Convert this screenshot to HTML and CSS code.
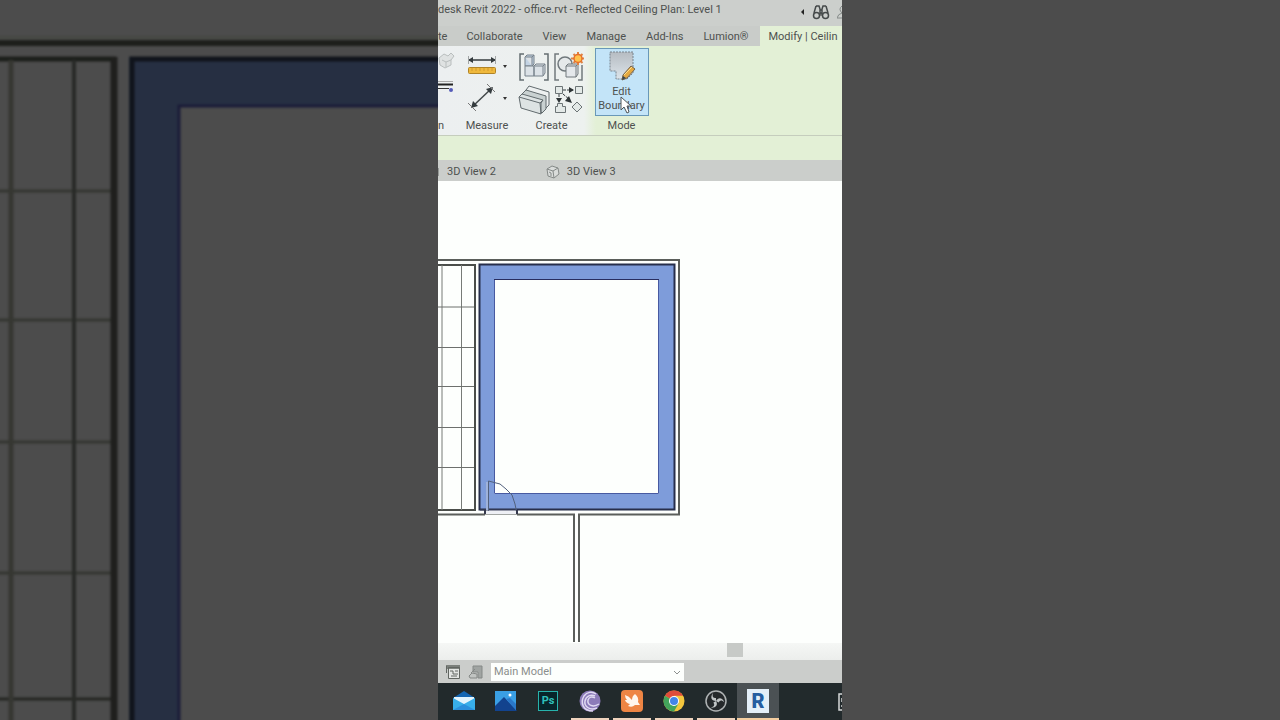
FILE: index.html
```html
<!DOCTYPE html>
<html lang="en">
<head>
<meta charset="utf-8">
<title>Reflected Ceiling Plan: Level 1</title>
<link rel="stylesheet" href="styles.css">
</head>
<body>
<div class="page">
  <div class="backdrop" aria-hidden="true">
    <svg class="fill" viewBox="0 0 438 720" preserveAspectRatio="xMaxYMin slice">
      <g class="soft">
        <path d="M-9 37.500H450" stroke="#464843" stroke-width="3"/>
        <path d="M-9 43H450" stroke="#1d1f1b" stroke-width="6"/>
        <path d="M-9 59H116" stroke="#1c1f1b" stroke-width="5"/>
        <path d="M-9 191H114M-9 320H114M-9 442H114M-9 573H114" stroke="#343631" stroke-width="3"/>
        <path d="M-9 699H114" stroke="#242622" stroke-width="3"/>
        <path d="M11 60V730" stroke="#363732" stroke-width="5"/>
        <path d="M74 60V730" stroke="#292b28" stroke-width="4"/>
        <path d="M114 57V730" stroke="#1f1f1d" stroke-width="7"/>
        <path d="M129 57H450V107H179V730H129Z" fill="#262f42"/>
        <path d="M450 59H132V730" fill="none" stroke="#10141b" stroke-width="5"/>
        <path d="M450 106H179V730" fill="none" stroke="#1b1c38" stroke-width="3"/>
      </g>
    </svg>
  </div>

  <main class="app">
    <header class="title">
      <span class="title-text">desk Revit 2022 - office.rvt - Reflected Ceiling Plan: Level 1</span>
      <span class="title-tools">
        <svg width="5" height="8" viewBox="0 0 5 8"><path d="M4 1V7L1 4Z" fill="#222"/></svg>
        <button class="plain" aria-label="Search">
          <svg width="18" height="16" viewBox="0 0 18 16" fill="none" stroke="#454a4a" stroke-width="1.500"><path d="M4 2h3l1 3v6H7M14 2h-3l-1 3v6h1M4 2L2 9M14 2l2 7M8 6h2M8 9h2"/><circle cx="4.500" cy="11.500" r="3"/><circle cx="13.500" cy="11.500" r="3"/></svg>
        </button>
        <svg width="5" height="16" viewBox="0 0 5 16" fill="none" stroke="#858a88"><path d="M5 2Q1 5 5 9Q1 10 0 14H5"/></svg>
      </span>
    </header>

    <nav class="tabs">
      <button class="tab cut">te</button>
      <button class="tab">Collaborate</button>
      <button class="tab">View</button>
      <button class="tab">Manage</button>
      <button class="tab">Add-Ins</button>
      <button class="tab">Lumion®</button>
      <button class="tab active">Modify | Ceilin</button>
    </nav>

    <section class="ribbon">
      <div class="panel edge">
        <div class="tools stack">
          <svg width="18" height="18" viewBox="0 0 18 18" fill="#dfe2e2" stroke="#b9bebe"><path d="M1 6l5-4 4 2 3-3 3 3-3 4v5l-6 3-5-3Z"/><path d="M4 8l4 2 5-2M8 10v5"/></svg>
          <svg width="18" height="18" viewBox="0 0 18 18"><path d="M0 4.500H15" stroke="#222" stroke-width="2"/><path d="M0 1.500H15" stroke="#aaa"/><path d="M0 8.500H11" stroke="#333"/><circle cx="13" cy="10" r="2" fill="#555bb8"/></svg>
        </div>
        <span class="panel-name">n</span>
      </div>
      <div class="panel measure">
        <div class="tools stack">
          <button class="plain drop" aria-label="Measure distance">
            <svg width="30" height="24" viewBox="0 0 30 24"><path d="M2 6H28" stroke="#343b3e" stroke-width="1.500"/><path d="M1 6l5-3v6ZM29 6l-5-3v6Z" fill="#343b3e"/><path d="M1.500 2v8M28.500 2v8" stroke="#a0a4a5"/><rect x="1.500" y="13.500" width="27" height="6" rx="1" fill="#efb83c" stroke="#b18426"/><path d="M5 14v3M9 14v3M13 14v3M17 14v3M21 14v3M25 14v3" stroke="#d19a2c"/></svg>
            <svg width="4" height="3" viewBox="0 0 4 3"><path d="M0 0h4L2 3Z" fill="#333"/></svg>
          </button>
          <button class="plain drop" aria-label="Aligned dimension">
            <svg width="30" height="28" viewBox="0 0 30 28" stroke="#42484a" fill="none"><path d="M5 23L25 4" stroke-width="1.500"/><path d="M4 24l2-7 5 5ZM26 3l-7 2 5 5Z" fill="#343b3e" stroke="none"/><path d="M1 19l8 8M20 0l8 8" stroke="#777"/></svg>
            <svg width="4" height="3" viewBox="0 0 4 3"><path d="M0 0h4L2 3Z" fill="#333"/></svg>
          </button>
        </div>
        <span class="panel-name">Measure</span>
      </div>
      <div class="panel create">
        <div class="tools quad">
          <button class="plain" aria-label="Create assembly">
            <svg width="32" height="30" viewBox="0 0 32 30" fill="none" stroke="#646d72" stroke-width="1.500"><path d="M6 2H2V28H6M26 2h4V28h-4"/><g fill="#dce2e7" stroke="#77818a" stroke-width="1"><path d="M7 5l2-2h7v9l-2 2H7Z" fill="#c3d3e4"/><path d="M7 14h9v10H7ZM16 14l2-2h9v9l-2 3h-9Z"/><path d="M7 5h7v9M14 5l2-2M16 14h9v10M25 14l2-2"/></g></svg>
          </button>
          <button class="plain" aria-label="Create group">
            <svg width="32" height="30" viewBox="0 0 32 30" fill="none" stroke="#71797d" stroke-width="1.500"><path d="M6 2H2V28H6M29 13v15h-4"/><circle cx="12" cy="12" r="7" fill="#e5e9ea"/><path d="M13 14l2-2h10v10l-2 3H13Z" fill="#e4e8eb" stroke-width="1"/><path d="M13 14h10v11M23 14l2-2" stroke-width="1"/><path d="M25 0v13M18 6.500h13M20.500 2l9 9M29.500 2l-9 9" stroke="#dd8444" stroke-width="2"/><circle cx="25" cy="6.500" r="4" fill="#ffc34d" stroke="#e86f29"/></svg>
          </button>
          <button class="plain" aria-label="Create similar">
            <svg width="32" height="30" viewBox="0 0 32 30" fill="#dde3e3" stroke="#626b6e"><path d="M8 5L11 1L31 7V20L27 24L9 18Z" fill="#edf0f0"/><path d="M4 9L8 5L28 11V24L24 28Z" fill="#c9d1d1"/><path d="M1 12l3-3 21 6-2 3v11L3 23Z"/><path d="M1 12l21 6 3-3M22 18l1 11" fill="none"/></svg>
          </button>
          <button class="plain" aria-label="Create parts">
            <svg width="32" height="30" viewBox="0 0 32 30" fill="#e3e9e7" stroke="#6c7476"><path d="M2.500 1.500h7v7h-7ZM22.500 1.500h7v7h-7ZM2.500 21.500h2v-3h5v3h3v6h-10Z"/><path d="M24 17l5 5-5 5-5-5Z"/><path d="M10 5h10M6 9v7M10 9l7 6" stroke="#333a3c" stroke-dasharray="3 1"/><path d="M21 5l-5-3v6ZM6 18l-3-5h6ZM19 18l-7-2 4-5Z" fill="#2e3436" stroke="none"/></svg>
          </button>
        </div>
        <span class="panel-name">Create</span>
      </div>
      <div class="panel mode">
        <div class="tools">
          <button class="edit">
            <svg width="28" height="32" viewBox="0 0 28 32"><defs><linearGradient id="sheet" x2="0" y2="1"><stop stop-color="#b6bcc2"/><stop offset="1" stop-color="#dce4ea"/></linearGradient></defs><path d="M2 1H25V22L19 28H8V20H2Z" fill="url(#sheet)" stroke="#78848e" stroke-dasharray="2 1"/><path d="M14 29l1-5 8-9 4 3-8 9Z" fill="#e6a940" stroke="#76634a"/><path d="M16 24l8-8" stroke="#ffe08c"/><path d="M14 29l1-4 3 2Z" fill="#38444d"/></svg>
            <span>Edit<br>Boundary</span>
            <svg class="cursor" width="12" height="18" viewBox="0 0 12 18"><path d="M1 1V14L4 11L7 17L9 16L7 10H11Z" fill="#fff" stroke="#4f5558"/></svg>
          </button>
        </div>
        <span class="panel-name">Mode</span>
      </div>
    </section>

    <div class="options"></div>

    <nav class="views">
      <span class="view-edge"></span>
      <button class="view">3D View 2</button>
      <button class="view second"><svg width="14" height="14" viewBox="0 0 14 14" fill="#d9dcda" stroke="#858a88"><path d="M1 4l5-3 6 2 1 6-5 4-6-2Z"/><path d="M1 4l6 2 5-3M7 6l1 7M3 7l2 1v3" fill="none"/></svg>3D View 3</button>
    </nav>

    <section class="canvas" aria-label="Ceiling plan drawing">
      <svg class="fill" viewBox="0 0 404 462" preserveAspectRatio="xMinYMin slice">
        <g fill="none">
          <path d="M-2 84H37V329H-2Z" stroke="#4b4e4a" stroke-width="2"/>
          <path d="M4 84V329M23.500 84V329" stroke="#777b77"/>
          <path d="M0 126H36M0 166.500H36M0 205.500H36M0 246.500H36M0 286.500H36" stroke="#6d706d"/>
          <path d="M41 83H237V329H41ZM56 99V313H221V99Z" fill="#7e9cda" fill-rule="evenodd"/>
          <path d="M41.500 83.500H236.500V328.500H41.500Z" stroke="#272e4b" stroke-width="2"/>
          <path d="M56.500 98.500H220.500V312.500H56.500Z" stroke="#485aa1"/>
          <path d="M56 98.500H221" stroke="#282d5f"/>
          <path d="M0 79H241V333.500H141V461M0 333.500H47M79 333.500H136V461" stroke="#5b5e5b" stroke-width="2"/>
          <path d="M48 329H79V333H48Z" fill="#eef0f5"/>
          <path d="M47 333.500H79" stroke="#a2a6a3"/>
          <path d="M42 329H79" stroke="#3c425c"/>
          <path d="M48 301H51V329H48Z" fill="#9fb2da"/>
          <path d="M50.500 330V300L62 303L68 308L74 314L77 323L79 333" stroke="#52617d"/>
          <path d="M47 328V333M79 329V333" stroke="#353a4d" stroke-width="2"/>
        </g>
      </svg>
    </section>

    <div class="scroll"><span class="thumb"></span></div>

    <div class="status">
      <button class="plain" aria-label="Worksets"><svg width="16" height="16" viewBox="0 0 16 16" fill="#e3e5e3" stroke="#626662"><path d="M3.500 3.500h11v11h-11Z"/><path d="M1 2h14M1 4h14" stroke-width="1.500"/><path d="M1.500 2v7M5 7h3v3h5M6 12h6M10 7h3" fill="none"/></svg></button>
      <button class="plain" aria-label="Design options"><svg width="16" height="16" viewBox="0 0 16 16" fill="#a0a4a2" stroke="#858987"><path d="M5 2h9v12h-4V8H5Z"/><path d="M1 12l3-3 5 1v4H2Z" fill="#c1c4c2"/><path d="M3 9l4-4" /></svg></button>
      <label class="option"><select aria-label="Active design option"><option>Main Model</option></select>
        <svg class="chevron" width="8" height="6" viewBox="0 0 8 6"><path d="M1 1l3 3 3-3" fill="none" stroke="#8c908e"/></svg></label>
    </div>

    <footer class="taskbar">
      <button class="task" aria-label="Mail"><svg width="24" height="24" viewBox="0 0 24 24"><path d="M1 9L12 2l11 7v12H1Z" fill="#1566b2"/><path d="M2 8h20v7H2Z" fill="#e3f4fd"/><path d="M1 9l11 6 11-6v12H1Z" fill="#38aeea"/><path d="M1 21l11-6 11 6Z" fill="#2b8fdc"/></svg></button>
      <button class="task" aria-label="Photos"><svg width="24" height="24" viewBox="0 0 24 24"><path d="M1 2h21v20H1Z" fill="#3a9fe4"/><path d="M1 17L10 8l13 14H1Z" fill="#12438e"/><path d="M12 10l4-1 6 6v6Z" fill="#2a78c9"/><circle cx="16" cy="6" r="1.500" fill="#fff"/></svg></button>
      <button class="task ps" aria-label="Photoshop"><span>Ps</span></button>
      <button class="task open" aria-label="BitTorrent"><svg width="24" height="24" viewBox="0 0 24 24" fill="none" stroke="#e0daf2"><circle cx="12" cy="12" r="10.500" fill="#8c7bb9" stroke="none"/><path d="M15 22C5 22 2 14 6 7c3-4 8-5 12-2" stroke-width="1.500"/><path d="M19 19C11 22 6 17 7 12c1-5 6-7 10-5" stroke-width="1.500"/><path d="M21 15c-6 4-12 1-11-4 1-3 4-4 7-2" stroke-width="1.500"/></svg></button>
      <button class="task open" aria-label="Bird app"><svg width="24" height="24" viewBox="0 0 24 24"><rect x="1" y="1" width="22" height="22" rx="4" fill="#ee8544"/><path d="M5 6Q9 7 12 11Q12 7 15 5Q19 8 18 13L20 16L15 16Q12 19 8 17L10 15Q6 14 5 11L7 11Q5 9 5 6Z" fill="#fff6ed"/></svg></button>
      <button class="task open" aria-label="Chrome"><svg width="24" height="24" viewBox="0 0 24 24"><circle cx="12" cy="12" r="10.500" fill="#f4c63d"/><path d="M12 12L2.900 6.800A10.500 10.500 0 0 1 21.100 6.800H12Z" fill="#df4c3b"/><path d="M12 12L2.900 6.800A10.500 10.500 0 0 0 12 22.500l4.500-8Z" fill="#43a45b"/><circle cx="12" cy="12" r="5" fill="#fff"/><circle cx="12" cy="12" r="4" fill="#4385e8"/></svg></button>
      <button class="task open" aria-label="OBS Studio"><svg width="24" height="24" viewBox="0 0 24 24"><circle cx="12" cy="12" r="10" fill="#25292b" stroke="#afb3b4" stroke-width="1.500"/><g fill="#c1c5c6"><path d="M12 12C7 12 6 8 9 4C8 8 9 9 12 9Z"/><path d="M12 12C7 12 6 8 9 4C8 8 9 9 12 9Z" transform="rotate(120 12 12)"/><path d="M12 12C7 12 6 8 9 4C8 8 9 9 12 9Z" transform="rotate(240 12 12)"/></g></svg></button>
      <button class="task open current revit" aria-label="Revit"><span>R</span></button>
      <svg class="tray" width="4" height="18" viewBox="0 0 4 18" fill="none" stroke="#d6d9d9" stroke-width="1.500"><path d="M4 1H1V17H4M4 5v4M4 12v2"/></svg>
    </footer>
  </main>

  <div class="backdrop"></div>
</div>
</body>
</html>
```
FILE: styles.css
```css
* { box-sizing: border-box; }

body {
  margin: 0;
  background: #4c4c4c;
  color: #4e514f;
  font: 11px/14px Roboto, "Open Sans", sans-serif;
}

button, select {
  margin: 0;
  padding: 0;
  border: 0;
  background: none;
  color: inherit;
  font: inherit;
}

svg { display: block; flex: none; }

.page {
  display: grid;
  grid-template-columns: minmax(0, 438fr) minmax(0, 404fr) minmax(0, 438fr);
  min-height: 100vh;
}

.backdrop { overflow: hidden; background: #4c4c4c; display: grid; }
.fill { width: 100%; height: 100%; min-height: 0; }
.soft { filter: blur(1px); }

.app {
  display: flex;
  flex-direction: column;
  min-width: 0;
  overflow: hidden;
  background: #fdfffd;
  white-space: nowrap;
}

.title {
  display: flex;
  justify-content: space-between;
  height: 26px;
  padding-top: 3px;
  background: #cccfcc;
}
.title-tools { display: flex; align-items: center; gap: 7px; height: 18px; }
.plain { display: flex; align-items: center; justify-content: center; }

.tabs { display: flex; height: 20px; background: #c9ccc9; overflow: hidden; }
.tab { padding: 2px 10px 0; flex: none; }
.tab.cut { padding: 2px 9px 0 0; }
.tab.active { flex: 1 0 auto; margin-left: 2px; padding: 2px 0 0 8px; background: #e3f0d6; text-align: left; }

.ribbon {
  display: flex;
  height: 90px;
  border-bottom: 1px solid #c5cdbd;
  background: linear-gradient(90deg, #eceff0 0, #edf1ef 146px, #e3f0d6 158px);
}
.panel { display: flex; flex-direction: column; align-items: center; flex: none; }
.panel-name { line-height: 16px; }
.tools { display: flex; height: 72px; padding-top: 2px; }
.stack { flex-direction: column; justify-content: space-evenly; }
.edge { width: 20px; align-items: flex-start; }
.edge .tools { justify-content: flex-start; padding-top: 6px; gap: 10px; }
.measure { width: 58px; }
.create { width: 71px; }
.mode { width: 69px; }
.drop { gap: 6px; }
.quad { display: grid; grid-template-columns: 32px 32px; gap: 3px; align-content: center; }

.edit {
  position: relative;
  display: flex;
  flex-direction: column;
  align-items: center;
  width: 54px;
  height: 68px;
  padding-top: 2px;
  gap: 2px;
  border: 1px solid #6998b8;
  background: #c3e4f8;
}
.cursor { position: absolute; left: 24px; top: 47px; }

.options { height: 24px; background: #e3f0d6; }

.views {
  display: flex;
  align-items: center;
  height: 21px;
  padding-top: 3px;
  background: #cbcecb;
}
.view-edge { width: 1px; height: 8px; background: #969a97; }
.view { display: flex; align-items: center; gap: 7px; padding: 0 8px; }
.second { margin-left: 34px; }

.canvas { flex: 1 0 462px; display: grid; overflow: hidden; }

.scroll { height: 17px; background: linear-gradient(#f5f7f5, #eceeec); }
.thumb { display: block; width: 16px; height: 14px; margin-left: 289px; background: #c7cac7; }

.status {
  display: flex;
  align-items: center;
  gap: 7px;
  height: 23px;
  padding-left: 7px;
  background: #cbcdcb;
}
.option { position: relative; width: 193px; }
.option select {
  display: block;
  width: 100%;
  height: 18px;
  padding-left: 3px;
  border-radius: 0;
  background: #fdfffd;
  color: #8b8e8c;
  appearance: none;
}
.chevron { position: absolute; right: 3px; top: 7px; }

.taskbar { display: flex; height: 37px; padding-left: 5px; background: #222a2c; }
.task {
  display: flex;
  align-items: center;
  justify-content: center;
  width: 42px;
  flex: none;
  border-bottom: 2px solid transparent;
}
.open { border-image: linear-gradient(90deg, transparent 4px, #efd3bd 4px, #efd3bd 38px, transparent 38px) 2; }
.current { background: #4b5154; border-image: linear-gradient(#f4cda0, #f4cda0) 2; }
.ps span {
  width: 20px;
  height: 20px;
  border: 1px solid #27b3ac;
  background: #08262b;
  color: #2fc0bb;
  font-weight: 700;
  line-height: 18px;
}
.revit span {
  width: 22px;
  height: 24px;
  background: #e4eff8;
  color: #255da0;
  font-size: 20px;
  font-weight: 900;
  line-height: 24px;
}
.tray { margin: 10px 0 0 auto; }
```
